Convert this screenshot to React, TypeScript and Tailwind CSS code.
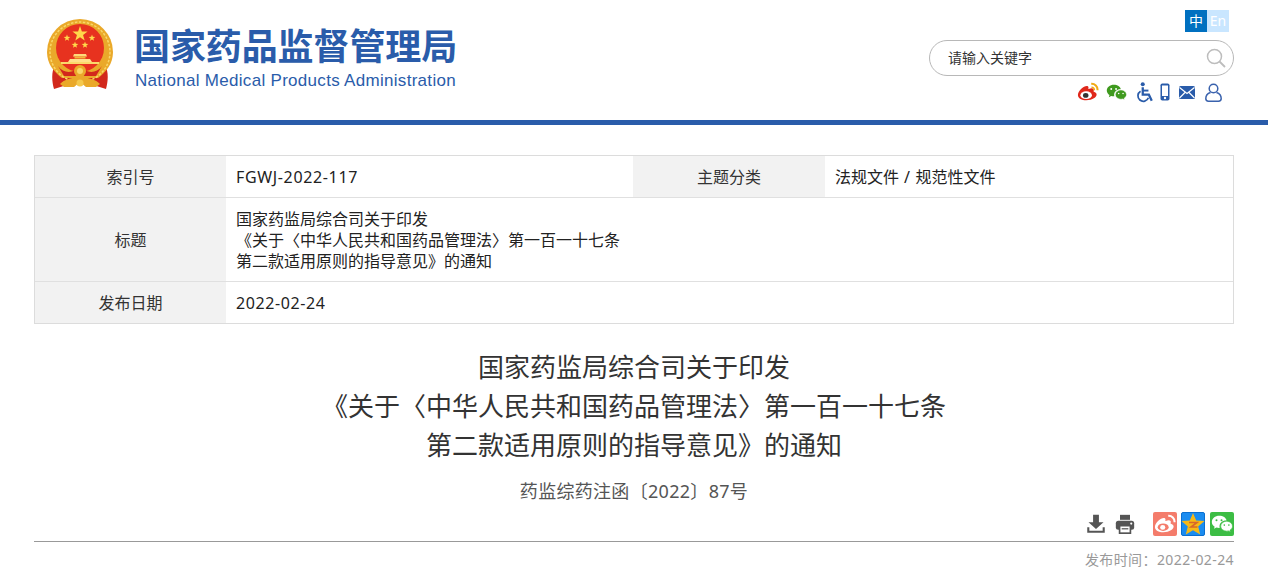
import type { ReactNode } from 'react'

const cjk = 'font-["Noto_Sans","Noto_Sans_CJK_SC",sans-serif]'

function Star({ cx, cy, r, fill = '#ffd84a' }: { cx: number; cy: number; r: number; fill?: string }) {
  const points = Array.from({ length: 10 }, (_, i) => {
    const radius = i % 2 === 0 ? r : r * 0.4
    const angle = (Math.PI / 5) * i - Math.PI / 2
    return `${cx + radius * Math.cos(angle)},${cy + radius * Math.sin(angle)}`
  }).join(' ')
  return <polygon points={points} fill={fill} />
}

function Emblem() {
  return (
    <svg width="68" height="72" viewBox="0 0 68 72">
      <path d="M9 47 C5 54 6 64 8 71 L24 66 L44 66 L60 71 C62 64 63 54 59 47 Z" fill="#d2281c" />
      <path d="M1 34 A33 33 0 1 1 67 34 C67 46 60 54 52 60 L16 60 C8 54 1 46 1 34 Z" fill="#eaa92a" />
      <circle cx="34" cy="34" r="30" fill="none" stroke="#f9d76a" strokeWidth="1.500" strokeDasharray="2.500 1.500" />
      <circle cx="34" cy="30" r="24" fill="#e7321f" />
      <Star cx={34} cy={16} r={8} />
      <Star cx={21} cy={20} r={3.500} />
      <Star cx={46} cy={20} r={3.500} />
      <Star cx={29} cy={27} r={3.500} />
      <Star cx={39} cy={27} r={3.500} />
      <path d="M28 36 H40 L41 38.500 H27 Z" fill="#ffd97a" />
      <rect x="28.500" y="38.500" width="11" height="2" fill="#f3b73d" />
      <path d="M24 41 H44 L46 44 H22 Z" fill="#ffe08a" />
      <rect x="15" y="44" width="38" height="2" fill="#fbd86a" />
      <path d="M12 48 C18 56 26 55 34 50 C42 55 50 56 56 48 L50 58 H18 Z" fill="#d2281c" />
      <circle cx="34" cy="53" r="6" fill="#eaa92a" />
      <circle cx="34" cy="53" r="3" fill="#f9d76a" />
      <path d="M14 66 C22 57 46 57 54 66 L50 69 H40 L34 64 L28 69 H18 Z" fill="#eaa92a" />
      <circle cx="34" cy="65" r="3.500" fill="#f5c94d" />
    </svg>
  )
}

function Icon({ children, className }: { children: ReactNode; className?: string }) {
  return (
    <svg viewBox="0 0 24 24" className={className}>
      {children}
    </svg>
  )
}

const weiboPath =
  'M10 21c-4.600 0-9-2.200-9-5.800 0-2 1.300-4.300 3.400-6.400 3-3 6.400-4.200 7.700-2.900.5.500.6 1.500.3 2.500-.2.500.4.200.4.200 2.400-.9 4.500-1 5.300.1.400.6.400 1.400 0 2.300-.2.400.1.500.4.600 1.400.4 2.900 1.500 2.900 3.200 0 3-4.200 6.200-11.400 6.200Z'
const wechatBig =
  'M9 3C4.500 3 .9 6 .9 9.700c0 2.100 1.200 4 3.100 5.200l-.8 2.400 2.700-1.400c1 .2 1.900.4 2.900.4h.7a6 6 0 0 1-.2-1.700c0-3.500 3.100-6.300 6.900-6.300h.8C16.600 5.200 13 3 9 3Z'
const wechatSmall =
  'M23.500 14.400c0-3-2.900-5.400-6.400-5.400-3.600 0-6.500 2.400-6.500 5.400s2.900 5.400 6.500 5.400c.7 0 1.500-.1 2.100-.3l2 1.100-.5-1.800c1.700-1.100 2.800-2.700 2.800-4.400Z'

function ActionIcons() {
  return (
    <div className="flex h-[22px] items-center">
      <Icon className="h-[22px] w-[22px]">
        <path d={weiboPath} fill="#e0281b" />
        <ellipse cx="10" cy="15.500" rx="6.300" ry="4.200" fill="#fff" />
        <ellipse cx="9.500" cy="15.700" rx="3" ry="2.700" fill="#333" />
        <path d="M15.500 2a7.500 7.500 0 0 1 8 8h-2.200a5.400 5.400 0 0 0-5.800-5.800Z" fill="#f0aa14" />
        <path d="M15.800 6a3.800 3.800 0 0 1 4 4h-1.800a2.100 2.100 0 0 0-2.200-2.300Z" fill="#f0aa14" />
      </Icon>
      <Icon className="ml-[7px] h-[21px] w-[21px]">
        <path d={wechatBig} fill="#3f9a1e" />
        <path d={wechatSmall} fill="#3f9a1e" stroke="#fff" strokeWidth="0.700" />
        <circle cx="6" cy="7.900" r="1.100" fill="#fff" />
        <circle cx="11.500" cy="7.900" r="1.100" fill="#fff" />
        <circle cx="14.500" cy="13.200" r=".9" fill="#fff" />
        <circle cx="19.500" cy="13.200" r=".9" fill="#fff" />
      </Icon>
      <Icon className="ml-[7px] h-[21px] w-[21px]">
        <circle cx="10" cy="2.500" r="2.300" fill="#2a5caa" />
        <path d="M10 6v8.500h7l3.300 7" fill="none" stroke="#2a5caa" strokeWidth="2.600" />
        <path d="M10 9.800h6.500" fill="none" stroke="#2a5caa" strokeWidth="2.200" />
        <path d="M7.500 10.500a6.200 6.200 0 1 0 9 7.500" fill="none" stroke="#2a5caa" strokeWidth="2" />
      </Icon>
      <svg width="10" height="18" viewBox="0 0 10 18" className="ml-[5px]">
        <rect x="0.500" y="0.500" width="9" height="17" rx="1.800" fill="#2a5caa" />
        <rect x="2" y="2.500" width="6" height="10.500" fill="#fff" />
        <circle cx="5" cy="15" r="1.200" fill="#fff" />
      </svg>
      <svg width="16" height="13" viewBox="0 0 16 13" className="ml-[9px]">
        <rect width="16" height="13" rx="1.500" fill="#2a5caa" />
        <path d="M0.500 1.500 8 7.500l7.500-6M0.500 12 6 6.500M15.500 12 10 6.500" fill="none" stroke="#fff" strokeWidth="1.200" />
      </svg>
      <svg width="17" height="19" viewBox="0 0 17 19" className="ml-[10px]">
        <circle cx="8.500" cy="5.500" r="4.300" fill="none" stroke="#3a62ad" strokeWidth="1.500" />
        <path d="M5.500 9.500C2.500 10.500.8 13 .8 15.500c0 1.700 1 2.700 2.700 2.700h10c1.700 0 2.700-1 2.700-2.700 0-2.500-1.700-5-4.700-6" fill="none" stroke="#3a62ad" strokeWidth="1.500" />
      </svg>
    </div>
  )
}

function ShareIcons() {
  return (
    <div className="flex items-center">
      <svg width="20" height="20" viewBox="0 0 24 24" className="mr-[9px]">
        <path d="M8.500 1h7v9h5.500L12 18 3 10h5.500Z" fill="#555" />
        <path d="M1.500 16v6.500h21V16h-2.500v4H4v-4Z" fill="#555" />
      </svg>
      <svg width="20" height="20" viewBox="0 0 24 24" className="mr-[18px]">
        <path d="M6 1h12v6H6Z" fill="#555" />
        <rect x="1" y="8" width="22" height="11" rx="3" fill="#555" />
        <rect x="5.500" y="14" width="13" height="9" fill="#fff" stroke="#555" strokeWidth="2" />
        <rect x="8" y="17" width="8" height="1.500" fill="#555" />
        <circle cx="19.500" cy="11.500" r="1.300" fill="#fff" />
      </svg>
      <div className="flex h-6 w-6 items-center justify-center rounded-[2px] bg-[#f47c6b]">
        <Icon className="h-[22px] w-[22px]">
          <path d={weiboPath} fill="#fff" />
          <ellipse cx="10" cy="15.500" rx="6" ry="4" fill="#f47c6b" />
          <ellipse cx="9.500" cy="15.700" rx="2.800" ry="2.500" fill="#fff" />
          <path d="M15.500 2a7.500 7.500 0 0 1 8 8h-2.200a5.400 5.400 0 0 0-5.800-5.800Z" fill="#fff" />
        </Icon>
      </div>
      <div className="ml-[4px] flex h-6 w-6 items-center justify-center rounded-[2px] border border-[#0a6fd0] bg-[#1a8cf0]">
        <svg width="24" height="24" viewBox="0 0 24 24" className="shrink-0">
          <polygon points="12,1 15.200,8.400 23.500,9.100 17.200,14.500 19.200,22.600 12,18.300 4.800,22.600 6.800,14.500 .5,9.100 8.800,8.400" fill="#f7b916" />
          <path d="M8 10.500h8l-6 4.500h6.500" fill="none" stroke="#d8672a" strokeWidth="1.600" />
        </svg>
      </div>
      <div className="ml-[5px] flex h-6 w-6 items-center justify-center rounded-[2px] bg-[#3cbd44]">
        <Icon className="h-[22px] w-[22px]">
          <path d={wechatBig} fill="#fff" />
          <path d={wechatSmall} fill="#fff" stroke="#3cbd44" strokeWidth="0.700" />
          <circle cx="6" cy="7.900" r="1.100" fill="#3cbd44" />
          <circle cx="11.500" cy="7.900" r="1.100" fill="#3cbd44" />
          <circle cx="14.500" cy="13.200" r=".9" fill="#3cbd44" />
          <circle cx="19.500" cy="13.200" r=".9" fill="#3cbd44" />
        </Icon>
      </div>
    </div>
  )
}

function Header() {
  return (
    <header className="flex h-[120px] justify-between pl-[46px] pr-[34px]">
      <div className="flex pt-[18px]">
        <Emblem />
        <div className="ml-[21px] pt-[7px]">
          <div className="-ml-px h-[43px] text-[36px] leading-[43px] font-bold tracking-[-0.1px] whitespace-nowrap text-[#2a5caa]">
            国家药品监督管理局
          </div>
          <div className="mt-[3px] font-['Liberation_Sans',sans-serif] text-[17px] leading-[20px] tracking-[0.3px] whitespace-nowrap text-[#2a5caa]">
            National Medical Products Administration
          </div>
        </div>
      </div>
      <div className="flex w-[305px] flex-col items-end pt-[10px]">
        <div className="mr-[5px] flex h-[22px] text-[14px] leading-[22px] text-white">
          <span className="w-[22px] bg-[#0070c0] text-center">中</span>
          <span className="w-[22px] bg-[#c9e6ff] text-center">En</span>
        </div>
        <div className="mt-[8px] flex h-9 w-[305px] items-center justify-between rounded-[18px] border border-[#b8b8b8] pr-[6px] pl-[18px] text-[14px] text-[#333]">
          <span className="mb-[2px]">请输入关键字</span>
          <svg width="22" height="22" viewBox="0 0 22 22">
            <circle cx="9.500" cy="9.500" r="7" fill="none" stroke="#bdbdbd" strokeWidth="1.500" />
            <path d="M14.500 14.500 20 20" stroke="#bdbdbd" strokeWidth="1.800" />
          </svg>
        </div>
        <div className="mt-[5px] mr-[12px]">
          <ActionIcons />
        </div>
      </div>
    </header>
  )
}

function Label({ children, wide }: { children: ReactNode; wide?: boolean }) {
  return (
    <div className={`flex shrink-0 items-center justify-center bg-[#f2f2f2] pt-px text-[#333] ${wide ? 'w-[192px]' : 'w-[191px]'}`}>
      {children}
    </div>
  )
}

function InfoTable() {
  return (
    <div className="mx-[34px] mt-[30px] border border-[#dcdcdc] text-[16px] leading-[21px] text-[#222]">
      <div className="flex h-[42px] border-b border-[#e0e0e0]">
        <Label>索引号</Label>
        <div className="flex w-[407px] items-center pt-px pl-[10px] tracking-[0.65px]">FGWJ-2022-117</div>
        <Label wide>主题分类</Label>
        <div className="flex flex-1 items-center pt-px pl-[10px] whitespace-pre">
          法规文件<span className="tracking-[0.7px]"> / </span>规范性文件
        </div>
      </div>
      <div className="flex h-[84px] border-b border-[#e0e0e0]">
        <Label>标题</Label>
        <div className="flex items-center pt-px pl-[10px]">
          <div>
            国家药监局综合司关于印发
            <br />
            《关于〈中华人民共和国药品管理法〉第一百一十七条
            <br />
            第二款适用原则的指导意见》的通知
          </div>
        </div>
      </div>
      <div className="flex h-[41px]">
        <Label>发布日期</Label>
        <div className="flex items-center pt-px pl-[10px] tracking-[0.6px]">2022-02-24</div>
      </div>
    </div>
  )
}

export default function App() {
  return (
    <div className={`h-[584px] w-[1268px] overflow-hidden bg-white ${cjk}`}>
      <Header />
      <div className="h-[5px] bg-[#2a5caa]" />
      <InfoTable />
      <h1 className="mt-[24px] text-center text-[26px] leading-[39px] font-normal text-[#333]">
        国家药监局综合司关于印发
        <br />
        《关于〈中华人民共和国药品管理法〉第一百一十七条
        <br />
        第二款适用原则的指导意见》的通知
      </h1>
      <div className="mt-[14px] text-center text-[18px] leading-[24px] tracking-[0.3px] text-[#555]">药监综药注函〔2022〕87号</div>
      <div className="mx-[34px] mt-[9px] flex h-[30px] justify-end border-b border-[#999] pb-[5px]">
        <ShareIcons />
      </div>
      <div className="mx-[34px] mt-[9px] text-right text-[14px] leading-[18px] tracking-[0.4px] text-[#999]">发布时间：2022-02-24</div>
    </div>
  )
}
